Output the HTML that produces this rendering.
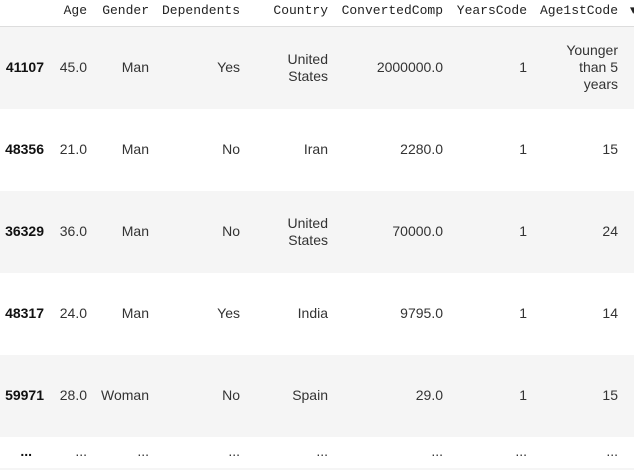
<!DOCTYPE html>
<html style="overflow:hidden;width:634px;height:470px"><head><style>
body{margin:0;width:634px;height:470px;overflow:hidden;background:#fff;font-family:"Liberation Sans",Arial,sans-serif;font-size:14px;color:#333;position:relative}
.h{position:absolute;top:3px;font-family:"Liberation Mono",monospace;font-size:13px;color:#222;text-align:right;white-space:nowrap}
.row{position:absolute;left:0;width:634px;height:82px}
.g{background:#f5f5f5}
.c{position:absolute;text-align:right;line-height:17px;white-space:nowrap}
.b{font-weight:bold;color:#111}
.line{position:absolute;left:0;width:634px;height:1px;background:#ddd;top:26px}
</style></head><body>
<div class="h" style="right:547px">Age</div>
<div class="h" style="right:485px">Gender</div>
<div class="h" style="right:394px">Dependents</div>
<div class="h" style="right:306px">Country</div>
<div class="h" style="right:191px">ConvertedComp</div>
<div class="h" style="right:107px">YearsCode</div>
<div class="h" style="right:16px">Age1stCode</div>
<div class="h" style="left:630px">▾</div>
<div class="line"></div>

<div class="row g" style="top:27px">
<div class="c b" style="right:590px;top:32px">41107</div>
<div class="c" style="right:547px;top:32px">45.0</div>
<div class="c" style="right:485px;top:32px">Man</div>
<div class="c" style="right:394px;top:32px">Yes</div>
<div class="c" style="right:306px;top:24px">United<br>States</div>
<div class="c" style="right:191px;top:32px">2000000.0</div>
<div class="c" style="right:107px;top:32px">1</div>
<div class="c" style="right:16px;top:15px">Younger<br>than 5<br>years</div>
</div>
<div class="row" style="top:109px">
<div class="c b" style="right:590px;top:32px">48356</div>
<div class="c" style="right:547px;top:32px">21.0</div>
<div class="c" style="right:485px;top:32px">Man</div>
<div class="c" style="right:394px;top:32px">No</div>
<div class="c" style="right:306px;top:32px">Iran</div>
<div class="c" style="right:191px;top:32px">2280.0</div>
<div class="c" style="right:107px;top:32px">1</div>
<div class="c" style="right:16px;top:32px">15</div>
</div>
<div class="row g" style="top:191px">
<div class="c b" style="right:590px;top:32px">36329</div>
<div class="c" style="right:547px;top:32px">36.0</div>
<div class="c" style="right:485px;top:32px">Man</div>
<div class="c" style="right:394px;top:32px">No</div>
<div class="c" style="right:306px;top:24px">United<br>States</div>
<div class="c" style="right:191px;top:32px">70000.0</div>
<div class="c" style="right:107px;top:32px">1</div>
<div class="c" style="right:16px;top:32px">24</div>
</div>
<div class="row" style="top:273px">
<div class="c b" style="right:590px;top:32px">48317</div>
<div class="c" style="right:547px;top:32px">24.0</div>
<div class="c" style="right:485px;top:32px">Man</div>
<div class="c" style="right:394px;top:32px">Yes</div>
<div class="c" style="right:306px;top:32px">India</div>
<div class="c" style="right:191px;top:32px">9795.0</div>
<div class="c" style="right:107px;top:32px">1</div>
<div class="c" style="right:16px;top:32px">14</div>
</div>
<div class="row g" style="top:355px">
<div class="c b" style="right:590px;top:32px">59971</div>
<div class="c" style="right:547px;top:32px">28.0</div>
<div class="c" style="right:485px;top:32px">Woman</div>
<div class="c" style="right:394px;top:32px">No</div>
<div class="c" style="right:306px;top:32px">Spain</div>
<div class="c" style="right:191px;top:32px">29.0</div>
<div class="c" style="right:107px;top:32px">1</div>
<div class="c" style="right:16px;top:32px">15</div>
</div>
<div class="row" style="top:437px;height:31px">
<div class="c b" style="right:602px;top:6px">...</div>
<div class="c" style="right:547px;top:6px">...</div>
<div class="c" style="right:485px;top:6px">...</div>
<div class="c" style="right:394px;top:6px">...</div>
<div class="c" style="right:306px;top:6px">...</div>
<div class="c" style="right:191px;top:6px">...</div>
<div class="c" style="right:107px;top:6px">...</div>
<div class="c" style="right:16px;top:6px">...</div>
</div>
<div class="row g" style="top:468px;height:2px"></div>
</body></html>
